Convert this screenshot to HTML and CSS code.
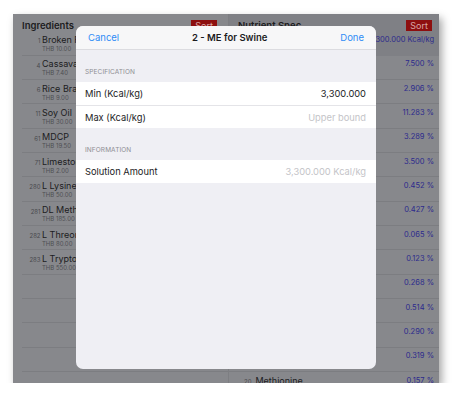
FILE: index.html
```html
<!DOCTYPE html>
<html>
<head>
<meta charset="utf-8">
<link rel="stylesheet" href="styles.css">
</head>
<body>
<div class="frame">
  <div class="cols">
    <div class="col left">
      <div class="colhead">
        <span class="coltitle">Ingredients</span>
        <span class="sort">Sort</span>
      </div>
      <div class="row"><span class="num">1</span><div class="item"><div class="name">Broken Rice</div><div class="price">THB 10.00</div></div></div>
      <div class="row"><span class="num">4</span><div class="item"><div class="name">Cassava</div><div class="price">THB 7.40</div></div></div>
      <div class="row"><span class="num">6</span><div class="item"><div class="name">Rice Bran</div><div class="price">THB 9.00</div></div></div>
      <div class="row"><span class="num">11</span><div class="item"><div class="name">Soy Oil</div><div class="price">THB 30.00</div></div></div>
      <div class="row"><span class="num">61</span><div class="item"><div class="name">MDCP</div><div class="price">THB 19.50</div></div></div>
      <div class="row"><span class="num">71</span><div class="item"><div class="name">Limestone</div><div class="price">THB 2.00</div></div></div>
      <div class="row"><span class="num">280</span><div class="item"><div class="name">L Lysine HCl</div><div class="price">THB 50.00</div></div></div>
      <div class="row"><span class="num">281</span><div class="item"><div class="name">DL Methionine</div><div class="price">THB 185.00</div></div></div>
      <div class="row"><span class="num">282</span><div class="item"><div class="name">L Threonine</div><div class="price">THB 80.00</div></div></div>
      <div class="row"><span class="num">283</span><div class="item"><div class="name">L Tryptophan</div><div class="price">THB 550.00</div></div></div>
      <div class="row"></div>
      <div class="row"></div>
      <div class="row"></div>
      <div class="row"></div>
      <div class="row"></div>
    </div>
    <div class="col right">
      <div class="topband">
        <div class="colhead">
          <span class="coltitle">Nutrient Spec</span>
          <span class="sort">Sort</span>
        </div>
        <div class="vrow first"><span class="val">3,300.000 Kcal/kg</span></div>
      </div>
      <div class="vrow"><span class="val">7.500 %</span></div>
      <div class="vrow"><span class="val">2.906 %</span></div>
      <div class="vrow"><span class="val">11.283 %</span></div>
      <div class="vrow"><span class="val">3.289 %</span></div>
      <div class="vrow"><span class="val">3.500 %</span></div>
      <div class="vrow"><span class="val">0.452 %</span></div>
      <div class="vrow"><span class="val">0.427 %</span></div>
      <div class="vrow"><span class="val">0.065 %</span></div>
      <div class="vrow"><span class="val">0.123 %</span></div>
      <div class="vrow"><span class="val">0.268 %</span></div>
      <div class="vrow"><span class="val">0.514 %</span></div>
      <div class="vrow"><span class="val">0.290 %</span></div>
      <div class="vrow"><span class="val">0.319 %</span></div>
      <div class="vrow"><span class="nlabel"><span class="num">20</span> Methionine</span><span class="val">0.157 %</span></div>
    </div>
  </div>

  <div class="modal">
    <div class="mhead">
      <span class="link">Cancel</span>
      <span class="mtitle">2 - ME for Swine</span>
      <span class="link">Done</span>
    </div>
    <div class="section">Specification</div>
    <div class="group">
      <div class="cell"><span>Min (Kcal/kg)</span><span class="value">3,300.000</span></div>
      <div class="cell"><span>Max (Kcal/kg)</span><span class="placeholder">Upper bound</span></div>
    </div>
    <div class="section">Information</div>
    <div class="group">
      <div class="cell"><span>Solution Amount</span><span class="placeholder">3,300.000 Kcal/kg</span></div>
    </div>
  </div>
</div>
</body>
</html>
```
FILE: styles.css
```css
* { box-sizing: border-box; }
html, body { margin: 0; padding: 0; background: #ffffff; }
body { font-family: Inter, "Liberation Sans", sans-serif; }

.frame {
  position: relative;
  margin: 14px 0 0 13px;
  width: 426px;
  height: 369px;
  background: #87888c;
  overflow: hidden;
  box-shadow: 3px 4px 8px rgba(0, 0, 0, 0.35);
}

.cols {
  display: grid;
  grid-template-columns: 215px 211px;
  height: 100%;
}

.col { display: flex; flex-direction: column; }
.right { border-left: 1px solid #7d7e82; }

.colhead {
  height: 17.4px;
  flex: none;
  display: flex;
  align-items: flex-end;
  justify-content: space-between;
  padding: 0 11px 0 9px;
}
.right .colhead { padding-right: 7px; }
.coltitle { font-size: 9.5px; line-height: 11px; font-weight: 600; color: #1c1c1e; }
.sort {
  background: #8d0f0f;
  color: #d8a6a6;
  font-size: 9px;
  line-height: 11px;
  padding: 0 4px;
}

.row {
  height: 24.33px;
  flex: none;
  margin-left: 9px;
  border-bottom: 1px solid #7c7d81;
  display: flex;
  align-items: flex-start;
  padding-top: 3.6px;
}
.num {
  width: 20px;
  text-align: right;
  font-size: 6px;
  color: #4a4a4e;
  padding-top: 2.5px;
  padding-right: 1.5px;
}
.name { font-size: 9px; color: #1c1c1e; line-height: 10px; white-space: nowrap; }
.price { font-size: 6px; color: #4e4f53; line-height: 8px; white-space: nowrap; }

.topband { background: #7f8085; }
.vrow {
  height: 24.33px;
  flex: none;
  border-bottom: 1px solid #7c7d81;
  display: flex;
  align-items: flex-start;
  justify-content: space-between;
  padding: 3.6px 5px 0 9px;
}
.vrow.first { border-bottom: none; }
.val {
  margin-left: auto;
  font-size: 7.5px;
  line-height: 10px;
  color: #2c2a8c;
  white-space: nowrap;
}
.nlabel { font-size: 9px; line-height: 10px; color: #1c1c1e; padding-left: 6px; }
.nlabel .num { font-size: 6px; width: auto; }

.modal {
  position: absolute;
  left: 63px;
  top: 12px;
  width: 300px;
  height: 343px;
  background: #efeff4;
  border-radius: 7px;
  overflow: hidden;
}
.mhead {
  height: 24px;
  background: #f7f7f8;
  border-bottom: 1px solid #dcdce0;
  display: flex;
  align-items: center;
  justify-content: space-between;
  padding: 0 12px 0 12px;
}
.link { font-size: 9.5px; color: #2f8cf6; }
.mtitle { font-size: 9.5px; font-weight: 600; color: #1c1c1e; }

.section {
  height: 32px;
  display: flex;
  align-items: flex-end;
  padding: 0 9px 6px;
  font-size: 6.5px;
  color: #8e8e93;
  text-transform: uppercase;
  letter-spacing: 0.1px;
}
.group { background: #ffffff; }
.cell {
  height: 23px;
  display: flex;
  align-items: center;
  justify-content: space-between;
  padding: 0 10px 0 9px;
  font-size: 9.3px;
  color: #1c1c1e;
}
.cell + .cell { border-top: 1px solid #e4e4e8; }
.value { color: #1c1c1e; }
.placeholder { color: #c4c4c8; }
```
